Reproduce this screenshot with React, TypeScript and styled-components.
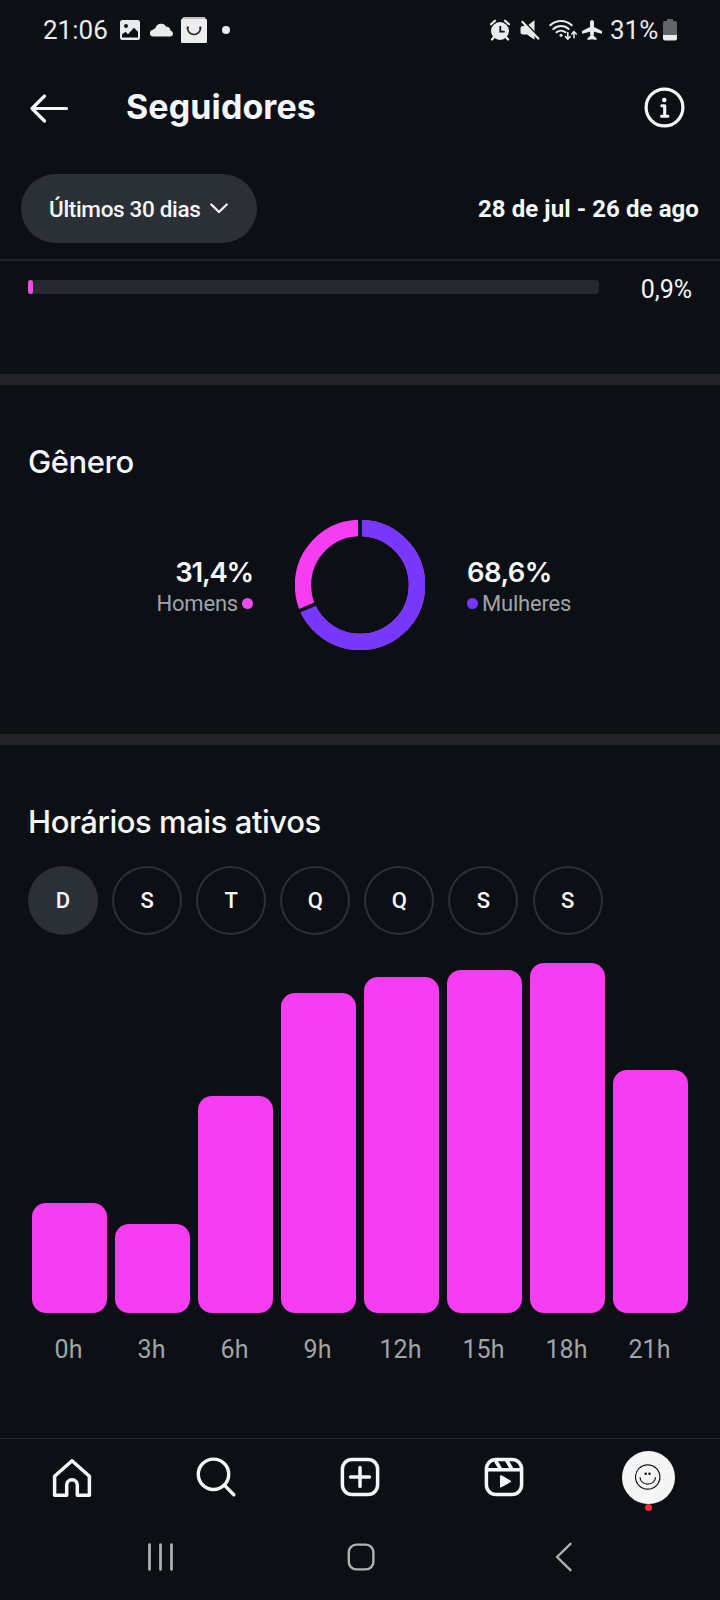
import React from "react";
import styled, { createGlobalStyle } from "styled-components";

const color = {
  bg: "#0c0f14",
  text: "#f5f8fb",
  muted: "#a0a4aa",
  status: "#e9ebec",
  pink: "#f63df2",
  purple: "#7638fa",
  chip: "#2b2f36",
  track: "#25282d",
  band: "#232328",
  system: "#b1b2b4",
};

const GlobalStyle = createGlobalStyle`
  * { box-sizing: border-box; }
  html, body { margin: 0; padding: 0; background: ${color.bg}; }
  body { font-family: Roboto, "Liberation Sans", sans-serif; color: ${color.text}; }
  svg { display: block; flex: none; }
  h1, h2, p { margin: 0; }
  button { border: 0; padding: 0; background: none; color: inherit; font: inherit; }
`;

const Screen = styled.div`
  width: 720px;
  height: 1600px;
  display: flex;
  flex-direction: column;
  background: ${color.bg};
  overflow: hidden;
`;

const StatusBar = styled.div`
  height: 60px;
  padding: 0 43px;
  display: flex;
  justify-content: space-between;
  align-items: center;
  color: ${color.status};
`;

const StatusGroup = styled.div`
  display: flex;
  align-items: center;
`;

const StatusText = styled.span<{ $width: number }>`
  width: ${(p) => p.$width}px;
  font-size: 26px;
  line-height: 30px;
  white-space: nowrap;
`;

const Header = styled.header`
  height: 114px;
  padding: 0 35.5px 20px 29px;
  display: flex;
  align-items: center;
`;

const Title = styled.h1`
  flex: 1;
  margin-left: 57px;
  font-family: Inter, Roboto, sans-serif;
  font-size: 34px;
  font-weight: 700;
  line-height: 44px;
  letter-spacing: 0.1px;
`;

const FilterBar = styled.div`
  height: 87px;
  padding: 0 21px 16px;
  border-bottom: 2px solid #202329;
  display: flex;
  align-items: center;
  justify-content: space-between;
`;

const PeriodButton = styled.button`
  width: 236px;
  height: 69px;
  padding: 0 29px 0 28px;
  border-radius: 35px;
  background: ${color.chip};
  display: flex;
  align-items: center;
  justify-content: space-between;
  font-size: 22.5px;
  font-weight: 500;
  letter-spacing: -0.33px;
  white-space: nowrap;
`;

const DateRange = styled.span`
  font-size: 24px;
  font-weight: 700;
  letter-spacing: 0.08px;
  white-space: nowrap;
`;

const ShareRow = styled.div`
  height: 113px;
  padding: 19px 28px 0;
  display: flex;
  justify-content: space-between;
  align-items: flex-start;
`;

const Track = styled.div`
  width: 571px;
  height: 14px;
  border-radius: 4px;
  background: ${color.track};
`;

const TrackFill = styled.div`
  width: 5px;
  height: 14px;
  border-radius: 3px;
  background: #ec4bea;
`;

const ShareValue = styled.span`
  font-size: 25px;
  line-height: 19px;
`;

const Band = styled.div`
  height: 11px;
  background: ${color.band};
`;

const Section = styled.section<{ $height: number }>`
  height: ${(p) => p.$height}px;
  padding: 56px 28px 0;
`;

const SectionTitle = styled.h2`
  font-family: Inter, Roboto, sans-serif;
  font-size: 31px;
  font-weight: 500;
  line-height: 41px;
  letter-spacing: -0.45px;
`;

const GenderRow = styled.div`
  margin-top: 38px;
  display: grid;
  grid-template-columns: 1fr 130px 1fr;
  column-gap: 42px;
  align-items: center;
`;

const GenderStat = styled.div<{ $side: "left" | "right" }>`
  padding-top: 5px;
  display: flex;
  flex-direction: column;
  align-items: ${(p) => (p.$side === "left" ? "flex-end" : "flex-start")};
`;

const GenderValue = styled.span<{ $spacing: number }>`
  font-family: Inter, Roboto, sans-serif;
  font-size: 27.5px;
  font-weight: 600;
  line-height: 31px;
  letter-spacing: ${(p) => p.$spacing}px;
`;

const GenderLabel = styled.span`
  display: flex;
  align-items: center;
  gap: 4px;
  font-size: 22px;
  line-height: 31px;
  letter-spacing: -0.2px;
  color: ${color.muted};
`;

const Dot = styled.i<{ $color: string }>`
  width: 11px;
  height: 11px;
  border-radius: 50%;
  background: ${(p) => p.$color};
`;

const Days = styled.div`
  margin-top: 24px;
  display: flex;
  gap: 14.1px;
`;

const Day = styled.button<{ $active: boolean }>`
  width: 70px;
  height: 69px;
  border-radius: 50%;
  border: 2px solid ${(p) => (p.$active ? color.chip : "#2d3035")};
  background: ${(p) => (p.$active ? color.chip : "transparent")};
  font-size: 22px;
  font-weight: 500;
`;

const Chart = styled.div`
  margin: 28px 4px 0;
  display: flex;
  gap: 8px;
`;

const Column = styled.div`
  width: 75px;
  height: 403px;
  display: flex;
  flex-direction: column;
  justify-content: flex-end;
  align-items: stretch;
`;

const Bar = styled.div`
  border-radius: 14px;
  background: ${color.pink};
`;

const Hour = styled.span`
  margin-top: 21px;
  padding-right: 2px;
  font-size: 25px;
  line-height: 32px;
  text-align: center;
  color: ${color.muted};
`;

const TabBar = styled.nav`
  height: 79px;
  border-top: 1px solid #25282c;
  display: grid;
  grid-template-columns: repeat(5, 144px);
  justify-items: center;
  align-items: center;
`;

const Tab = styled.button<{ $lift?: number }>`
  width: 54px;
  height: 54px;
  padding-bottom: ${(p) => p.$lift ?? 0}px;
  display: flex;
  align-items: center;
  justify-content: center;
`;

const Avatar = styled.button`
  position: relative;
  width: 53px;
  height: 53px;
  margin-bottom: 2px;
  border-radius: 50%;
  background: #f5f5f5;
  display: flex;
  align-items: center;
  justify-content: center;
`;

const Notice = styled.i`
  position: absolute;
  left: 23px;
  top: 53px;
  width: 7px;
  height: 7px;
  border-radius: 50%;
  background: #ee2b40;
`;

const SystemBar = styled.div`
  height: 82px;
  padding: 0 147px 3px;
  display: flex;
  justify-content: space-between;
  align-items: center;
`;

const PictureIcon = () => (
  <svg width="20" height="20" viewBox="0 0 20 20" style={{ marginRight: 10 }}>
    <path fill={color.status} fillRule="evenodd" d="M2.5 0h15A2.5 2.5 0 0 1 20 2.500v15a2.500 2.500 0 0 1-2.500 2.500h-15A2.500 2.500 0 0 1 0 17.500v-15A2.500 2.500 0 0 1 2.500 0zM6 4a2 2 0 1 0 0 4 2 2 0 0 0 0-4zM2 14.500V17.500h16v-5.500l-4-4.200-6 6.400-2.500-2.400z" />
  </svg>
);

const CloudIcon = () => (
  <svg width="24" height="14" viewBox="0 0 24 14" style={{ marginRight: 7 }}>
    <path fill={color.status} d="M3.500 13.500a3.400 3.400 0 0 1-.3-6.800 2.600 2.600 0 0 1 2.200-1.500A5.800 5.800 0 0 1 16.200 3.800a3.700 3.700 0 0 1 4.200 4 2.900 2.900 0 0 1 .4 5.700z" />
  </svg>
);

const BagIcon = () => (
  <svg width="26" height="26" viewBox="0 0 26 26" style={{ marginRight: 15 }}>
    <path fill="#bfc0c1" d="M2.500 0h21L26 3H0z" />
    <rect y="2" width="26" height="24" rx="1.500" fill="#ededed" />
    <path d="M6.500 11a6.500 6.500 0 0 0 13 0" fill="none" stroke="#222" strokeWidth="1.500" />
    <circle cx="6.700" cy="10.700" r="1.200" fill="#222" />
    <circle cx="19.300" cy="10.700" r="1.200" fill="#222" />
  </svg>
);

const DotIcon = () => (
  <svg width="8" height="8" viewBox="0 0 8 8">
    <circle cx="4" cy="4" r="4" fill={color.status} />
  </svg>
);

const AlarmIcon = () => (
  <svg width="20" height="22" viewBox="0 0 20 22" style={{ marginRight: 10 }}>
    <circle cx="10" cy="12" r="9" fill={color.status} />
    <path d="M1 5.300L5 1.700M19 5.300L15 1.700M4 18l-2 2.500M16 18l2 2.500" stroke={color.status} strokeWidth="2.200" strokeLinecap="round" />
    <path d="M10.300 7v5.600h4.400" fill="none" stroke={color.bg} strokeWidth="1.800" />
  </svg>
);

const MuteIcon = () => (
  <svg width="21" height="22" viewBox="0 0 21 22" style={{ marginRight: 8 }}>
    <path fill={color.status} d="M14.500 1.200v19.600L7 15.500H3a2.500 2.500 0 0 1-2.500-2.500V9.500A2.500 2.500 0 0 1 3 7h4z" />
    <path d="M3.500 2.200L21 20.500" stroke={color.bg} strokeWidth="2.200" />
    <path d="M1.800 2.300L19 20.300" stroke={color.status} strokeWidth="2.200" />
  </svg>
);

const WifiIcon = () => (
  <svg width="29" height="22" viewBox="0 0 29 22" style={{ marginRight: 4 }}>
    <g fill="none" stroke={color.status} strokeLinecap="round" strokeWidth="2">
      <path d="M1.300 6.300a15.500 15.500 0 0 1 21.400 0" />
      <path d="M4.300 10a11.400 11.400 0 0 1 15.400 0" />
      <path d="M7.500 13.300a7 7 0 0 1 9 0" />
      <path strokeWidth="1.600" d="M18.800 13.500v6.300M16.500 17.700l2.300 2.400 2.300-2.400M25 18.800v-5.800M22.700 15l2.300-2.400 2.300 2.400" />
    </g>
    <circle cx="12" cy="16.300" r="1.500" fill={color.status} />
  </svg>
);

const PlaneIcon = () => (
  <svg width="20" height="20" viewBox="0 0 20 20" style={{ marginRight: 8 }}>
    <path fill={color.status} d="M10 0c1.200 0 2 1 2 2.200v4.700L20 11v2.700l-8-1.900-.3 4 2.800 2.500V20L10 19.200 5.500 20v-1.700l2.800-2.500-.3-4L0 13.700V11l8-4.100V2.200C8 1 8.800 0 10 0z" />
  </svg>
);

const BatteryIcon = () => (
  <svg width="14" height="22" viewBox="0 0 14 22">
    <path fill="#626466" d="M4 0h6v2h2a2 2 0 0 1 2 2v12H0V4a2 2 0 0 1 2-2h2z" />
    <path fill={color.status} d="M0 16h14v3.500a2 2 0 0 1-2 2H2a2 2 0 0 1-2-2z" />
  </svg>
);

const BackArrow = () => (
  <svg width="40" height="34" viewBox="0 0 40 34">
    <path d="M15.500 6L3 18.500 15.500 31M3 18.500h34.500" fill="none" stroke={color.text} strokeWidth="3.200" strokeLinecap="round" strokeLinejoin="round" />
  </svg>
);

const InfoIcon = () => (
  <svg width="41" height="41" viewBox="0 0 41 41">
    <circle cx="20.500" cy="20.500" r="18.400" fill="none" stroke={color.text} strokeWidth="3.200" />
    <circle cx="20.300" cy="13" r="2.300" fill={color.text} />
    <path d="M17.800 18.700h2.900v10.200M17.600 29.200h6.300" fill="none" stroke={color.text} strokeWidth="3.100" strokeLinecap="round" strokeLinejoin="round" />
  </svg>
);

const ChevronDown = () => (
  <svg width="18" height="11" viewBox="0 0 18 11">
    <path d="M1.300 1.500L9 9l7.700-7.500" fill="none" stroke={color.text} strokeWidth="2.300" strokeLinecap="round" strokeLinejoin="round" />
  </svg>
);

const Donut = ({ women }: { women: number }) => {
  const r = 57;
  const length = 2 * Math.PI * r;
  const angle = women * 360;
  return (
    <svg width="130" height="130" viewBox="0 0 130 130">
      <circle cx="65" cy="65" r={r} fill="none" stroke={color.pink} strokeWidth="16.400" />
      <circle cx="65" cy="65" r={r} fill="none" stroke={color.purple} strokeWidth="16.400" strokeDasharray={`${length * women} ${length}`} transform="rotate(-90 65 65)" />
      <path d="M65 -1v21" stroke={color.bg} strokeWidth="4" />
      <path d="M65 -1v21" stroke={color.bg} strokeWidth="3.600" transform={`rotate(${angle} 65 65)`} />
    </svg>
  );
};

const HomeIcon = () => (
  <svg width="40" height="40" viewBox="0 0 40 40">
    <path d="M20 2.800L37.400 18.300V37.300H25.300V27a5.300 5.300 0 0 0-10.600 0v10.300H2.600V18.300z" fill="none" stroke={color.text} strokeWidth="3.500" strokeLinejoin="round" />
  </svg>
);

const SearchIcon = () => (
  <svg width="40" height="40" viewBox="0 0 40 40">
    <circle cx="17.500" cy="17.300" r="15.200" fill="none" stroke={color.text} strokeWidth="3.400" />
    <path d="M28.600 28.400l9.200 9.300" stroke={color.text} strokeWidth="3.400" strokeLinecap="round" />
  </svg>
);

const CreateIcon = () => (
  <svg width="40" height="40" viewBox="0 0 40 40">
    <rect x="2.400" y="2.400" width="35.200" height="35.200" rx="9.500" fill="none" stroke={color.text} strokeWidth="3.500" />
    <path d="M20 10.500v19M10.500 20h19" stroke={color.text} strokeWidth="3.500" strokeLinecap="round" />
  </svg>
);

const ReelsIcon = () => (
  <svg width="40" height="40" viewBox="0 0 40 40">
    <rect x="2.400" y="2.400" width="35.200" height="35.200" rx="9.500" fill="none" stroke={color.text} strokeWidth="3.500" />
    <path d="M2.500 12.700h35M11.200 3l5.500 9.500M22.500 3l5.500 9.500" fill="none" stroke={color.text} strokeWidth="3.500" />
    <path d="M17 19.200v10.200l9-5.100z" fill={color.text} stroke={color.text} strokeWidth="2" strokeLinejoin="round" />
  </svg>
);

const SmileyIcon = () => (
  <svg width="26" height="26" viewBox="0 0 26 26">
    <g fill="none" stroke="#111" strokeWidth="1.200">
      <circle cx="12.700" cy="13" r="12.200" />
      <path d="M5 13.300c0 9 15.500 9 15.500 0" />
    </g>
    <circle cx="10.700" cy="9.800" r="1.300" fill="#111" />
    <circle cx="14.500" cy="9.800" r="1.200" fill="#111" />
  </svg>
);

const RecentsIcon = () => (
  <svg width="28" height="30" viewBox="0 0 28 30">
    <path d="M2.500 2.500v25M13.500 2.500v25M24.500 2.500v25" stroke={color.system} strokeWidth="2.700" strokeLinecap="round" />
  </svg>
);

const SystemHomeIcon = () => (
  <svg width="28" height="30" viewBox="0 0 28 30" style={{ marginRight: 8 }}>
    <rect x="1.800" y="2.600" width="24.600" height="24.800" rx="7.500" fill="none" stroke={color.system} strokeWidth="2.400" />
  </svg>
);

const SystemBackIcon = () => (
  <svg width="18" height="30" viewBox="0 0 18 30">
    <path d="M15.500 1.800L2 15l13.500 13.200" fill="none" stroke={color.system} strokeWidth="2.400" strokeLinecap="round" strokeLinejoin="round" />
  </svg>
);

const days = ["D", "S", "T", "Q", "Q", "S", "S"];

const hours = [
  { label: "0h", height: 110 },
  { label: "3h", height: 89 },
  { label: "6h", height: 217 },
  { label: "9h", height: 320 },
  { label: "12h", height: 336 },
  { label: "15h", height: 343 },
  { label: "18h", height: 350 },
  { label: "21h", height: 243 },
];

export default function App() {
  return (
    <Screen>
      <GlobalStyle />
      <StatusBar>
        <StatusGroup>
          <StatusText $width={77}>21:06</StatusText>
          <PictureIcon />
          <CloudIcon />
          <BagIcon />
          <DotIcon />
        </StatusGroup>
        <StatusGroup>
          <AlarmIcon />
          <MuteIcon />
          <WifiIcon />
          <PlaneIcon />
          <StatusText $width={53}>31%</StatusText>
          <BatteryIcon />
        </StatusGroup>
      </StatusBar>
      <Header>
        <BackArrow />
        <Title>Seguidores</Title>
        <InfoIcon />
      </Header>
      <FilterBar>
        <PeriodButton>
          Últimos 30 dias
          <ChevronDown />
        </PeriodButton>
        <DateRange>28 de jul - 26 de ago</DateRange>
      </FilterBar>
      <ShareRow>
        <Track>
          <TrackFill />
        </Track>
        <ShareValue>0,9%</ShareValue>
      </ShareRow>
      <Band />
      <Section $height={349}>
        <SectionTitle>Gênero</SectionTitle>
        <GenderRow>
          <GenderStat $side="left">
            <GenderValue $spacing={-1.2}>31,4%</GenderValue>
            <GenderLabel>
              Homens
              <Dot $color="#ee4bec" />
            </GenderLabel>
          </GenderStat>
          <Donut women={0.686} />
          <GenderStat $side="right">
            <GenderValue $spacing={-0.6}>68,6%</GenderValue>
            <GenderLabel>
              <Dot $color={color.purple} />
              Mulheres
            </GenderLabel>
          </GenderStat>
        </GenderRow>
      </Section>
      <Band />
      <Section $height={693}>
        <SectionTitle>Horários mais ativos</SectionTitle>
        <Days>
          {days.map((day, i) => (
            <Day key={i} $active={i === 0}>{day}</Day>
          ))}
        </Days>
        <Chart>
          {hours.map((hour) => (
            <Column key={hour.label}>
              <Bar style={{ height: hour.height }} />
              <Hour>{hour.label}</Hour>
            </Column>
          ))}
        </Chart>
      </Section>
      <TabBar>
        <Tab><HomeIcon /></Tab>
        <Tab $lift={2}><SearchIcon /></Tab>
        <Tab $lift={2}><CreateIcon /></Tab>
        <Tab $lift={2}><ReelsIcon /></Tab>
        <Avatar>
          <SmileyIcon />
          <Notice />
        </Avatar>
      </TabBar>
      <SystemBar>
        <RecentsIcon />
        <SystemHomeIcon />
        <SystemBackIcon />
      </SystemBar>
    </Screen>
  );
}
